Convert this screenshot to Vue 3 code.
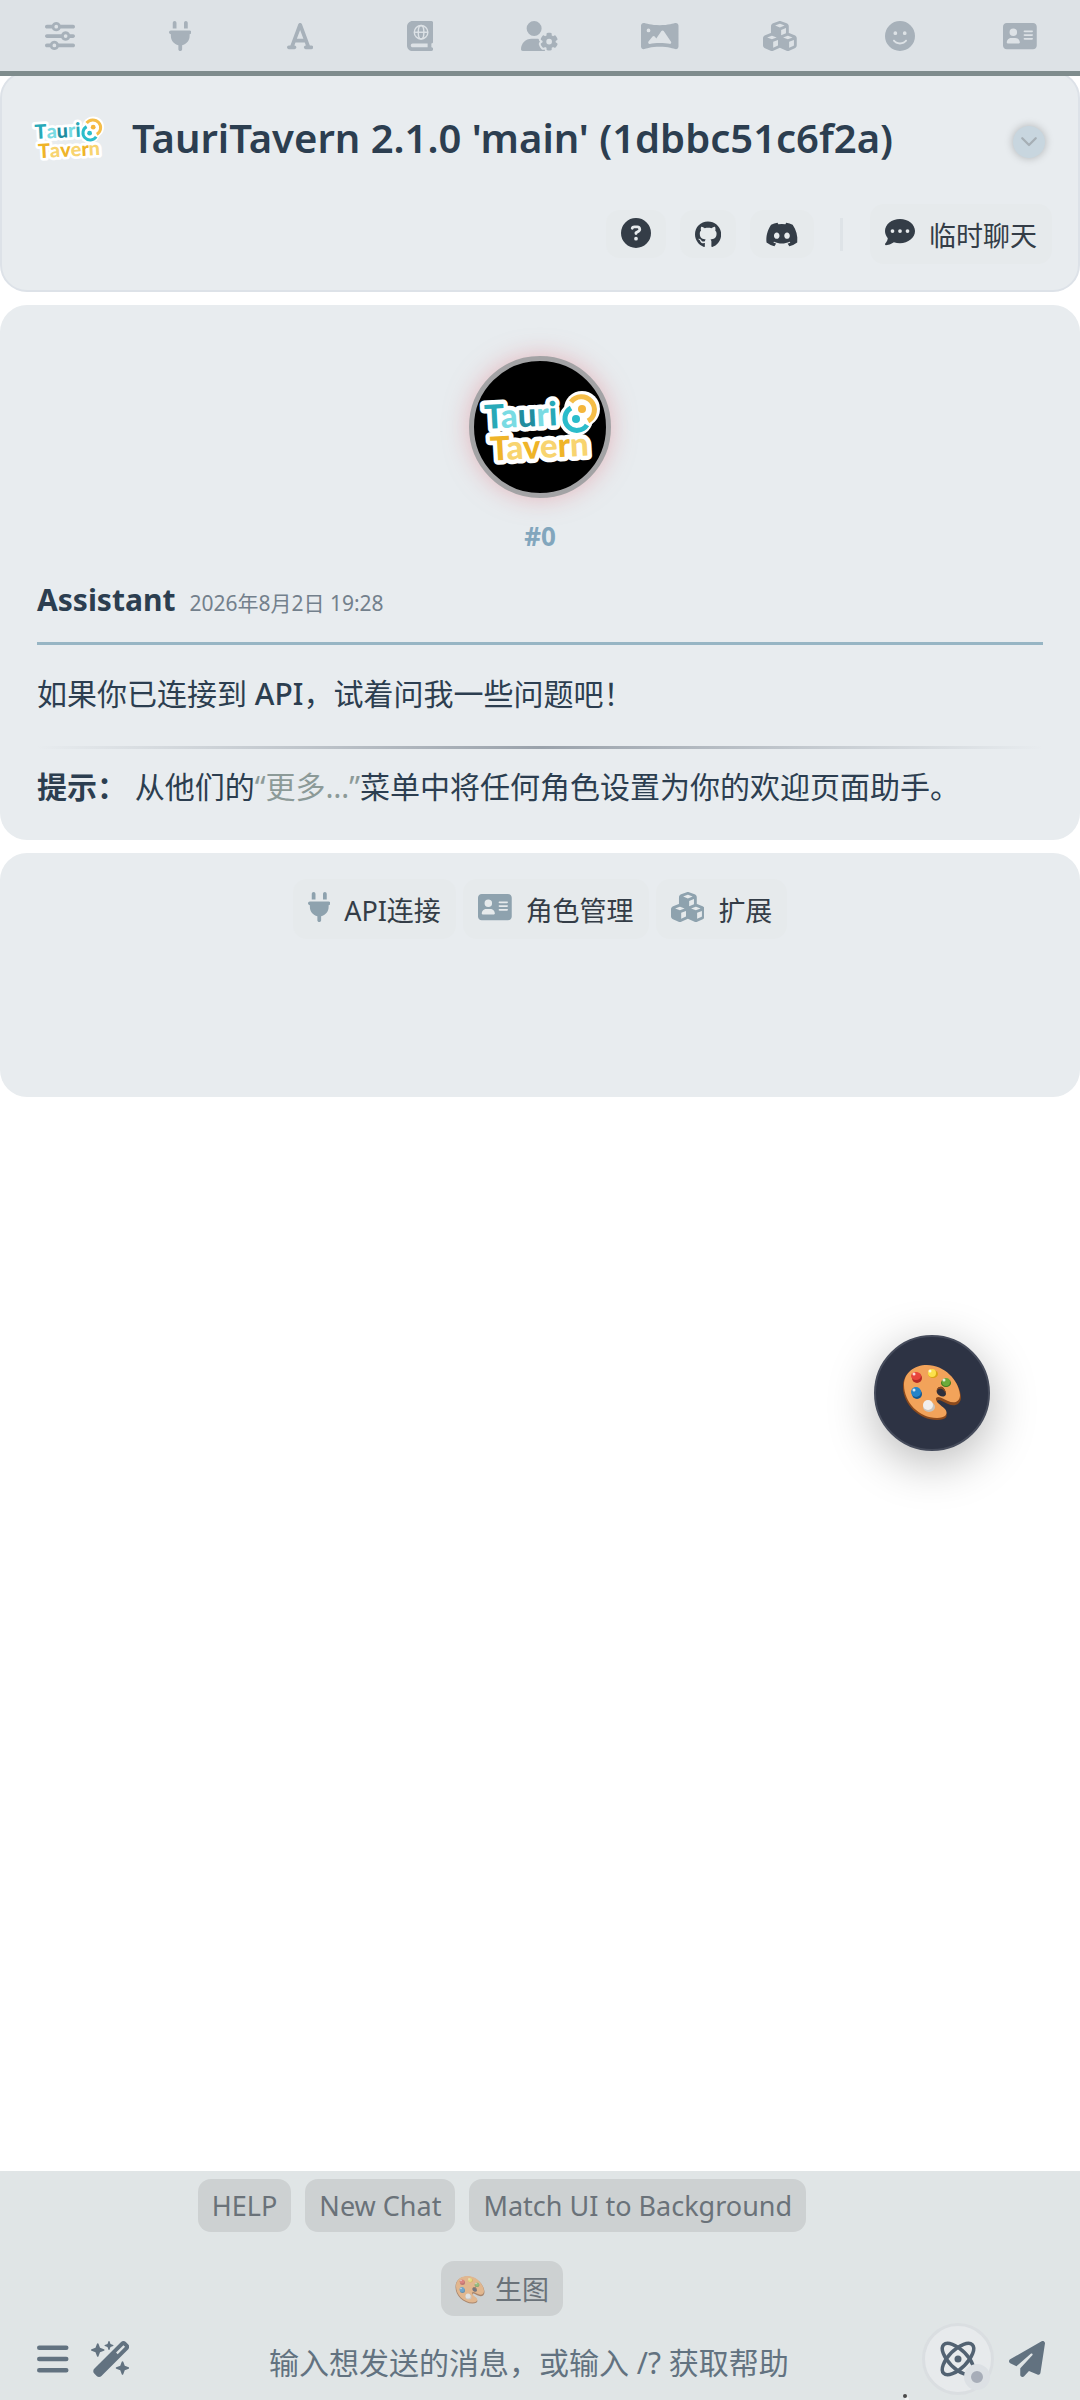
<script setup>
import { h, ref } from 'vue'

const draft = ref('')

// Two-tone wordmark: a white outline below, coloured letters above
const wordStyle = { font: '900 33px Lato, "Noto Sans", sans-serif' }
const word = (letters, x, y) =>
  h('text', { x, y, style: wordStyle }, letters.map(([c, fill]) => h('tspan', { fill, stroke: 'inherit' }, c)))
const tauri = [['T', '#28a9b8'], ['a', '#79dbe3'], ['u', '#218d9f'], ['r', '#79dbe3'], ['i', '#28a9b8']]
const tavern = [['T', '#efb428'], ['a', '#f8d46f'], ['v', '#efb428'], ['e', '#f8d46f'], ['r', '#efb428'], ['n', '#f8d46f']]
const outline = { stroke: '#fff', 'stroke-width': 9, 'stroke-linejoin': 'round', 'aria-hidden': 'true' }
const words = () => [word(tauri, 5, 37), word(tavern, 9, 69)]
const Logo = () =>
  h('svg', { viewBox: '0 0 120 76', role: 'img', 'aria-label': 'TauriTavern' }, [
    h('g', { transform: 'rotate(-3 60 38)', ...outline }, words()),
    h('circle', { cx: 102, cy: 20, r: 18, fill: '#fff' }),
    h('circle', { cx: 96, cy: 30, r: 17, fill: '#fff' }),
    h('g', { transform: 'rotate(-3 60 38)' }, words()),
    h('path', { d: 'M91 13A13 13 0 1 1 108 32', fill: 'none', stroke: '#f5bd48', 'stroke-width': 5 }),
    h('path', { d: 'M91 19A12 12 0 1 0 107 36', fill: 'none', stroke: '#2bbccb', 'stroke-width': 5 }),
    h('circle', { cx: 102, cy: 20, r: 4, fill: '#f5b63c' }),
    h('circle', { cx: 96, cy: 30, r: 4, fill: '#2bbccb' })
  ])

const icons = {
  sliders: { w: 512, d: 'M0 416c0 17.7 14.3 32 32 32l54.7 0c12.3 28.3 40.5 48 73.3 48s61-19.7 73.3-48L480 448c17.7 0 32-14.3 32-32s-14.3-32-32-32l-246.7 0c-12.3-28.3-40.5-48-73.3-48s-61 19.7-73.3 48L32 384c-17.7 0-32 14.3-32 32zm128 0a32 32 0 1 1 64 0 32 32 0 1 1 -64 0zM320 256a32 32 0 1 1 64 0 32 32 0 1 1 -64 0zm32-80c-32.8 0-61 19.7-73.3 48L32 224c-17.7 0-32 14.3-32 32s14.3 32 32 32l246.7 0c12.3 28.3 40.5 48 73.3 48s61-19.7 73.3-48l54.7 0c17.7 0 32-14.3 32-32s-14.3-32-32-32l-54.7 0c-12.3-28.3-40.5-48-73.3-48zM192 128a32 32 0 1 1 0-64 32 32 0 1 1 0 64zm73.3-64C253 35.7 224.8 16 192 16s-61 19.7-73.3 48L32 64C14.3 64 0 78.3 0 96s14.3 32 32 32l86.7 0c12.3 28.3 40.5 48 73.3 48s61-19.7 73.3-48L480 128c17.7 0 32-14.3 32-32s-14.3-32-32-32L265.3 64z' },
  plug: { w: 384, d: 'M96 0C78.3 0 64 14.3 64 32v96h64V32c0-17.7-14.3-32-32-32zM288 0c-17.7 0-32 14.3-32 32v96h64V32c0-17.7-14.3-32-32-32zM32 160c-17.7 0-32 14.3-32 32s14.3 32 32 32v32c0 77.4 55 142 128 156.8V480c0 17.7 14.3 32 32 32s32-14.3 32-32V412.8C297 398 352 333.4 352 256V224c17.7 0 32-14.3 32-32s-14.3-32-32-32H32z' },
  font: { w: 448, d: 'M254 52.8C249.3 40.3 237.3 32 224 32s-25.3 8.3-30 20.8L57.8 416H32c-17.7 0-32 14.3-32 32s14.3 32 32 32h96c17.7 0 32-14.3 32-32s-14.3-32-32-32h-1.8l18-48H303.8l18 48H320c-17.7 0-32 14.3-32 32s14.3 32 32 32h96c17.7 0 32-14.3 32-32s-14.3-32-32-32H390.2L254 52.8zM279.8 304H168.2L224 155.1 279.8 304z' },
  atlas: { w: 448, globe: true, d: 'M0 96C0 43 43 0 96 0H384h32c17.7 0 32 14.3 32 32V352c0 17.7-14.3 32-32 32v64c17.7 0 32 14.3 32 32s-14.3 32-32 32H384 96c-53 0-96-43-96-96V96zM64 416c0 17.7 14.3 32 32 32H352V384H96c-17.7 0-32 14.3-32 32z' },
  userGear: { w: 640, d: 'M224 0a128 128 0 1 1 0 256A128 128 0 1 1 224 0zM178.3 304h91.4c11.8 0 23.4 1.2 34.5 3.3c-2.1 18.5 7.4 35.6 21.8 44.8c-16.6 10.6-26.7 31.6-20 53.3c4 12.9 9.4 25.5 16.4 37.6s15.2 23.1 24.4 33c15.7 16.9 39.6 18.4 57.2 8.7v.9c0 9.2 2.7 18.5 7.9 26.3H29.7C13.3 512 0 498.7 0 482.3C0 383.8 79.8 304 178.3 304zM436 218.2c0-7 4.5-13.3 11.3-14.8c10.5-2.4 21.5-3.7 32.7-3.7s22.2 1.3 32.7 3.7c6.8 1.5 11.3 7.8 11.3 14.8v30.6c7.9 3.4 15.4 7.7 22.3 12.8l24.9-14.3c6.1-3.5 13.7-2.7 18.5 2.4c7.6 8.1 14.3 17.2 20.1 27.2s10.3 20.4 13.5 31c2.1 6.7-1.1 13.7-7.2 17.2l-25 14.4c.4 4 .7 8.1 .7 12.3s-.2 8.2-.7 12.3l25 14.4c6.1 3.5 9.2 10.5 7.2 17.2c-3.3 10.6-7.8 21-13.5 31s-12.5 19.1-20.1 27.2c-4.8 5.1-12.5 5.9-18.5 2.4l-24.9-14.3c-6.9 5.1-14.3 9.4-22.3 12.8l0 30.6c0 7-4.5 13.3-11.3 14.8c-10.5 2.4-21.5 3.7-32.7 3.7s-22.2-1.3-32.7-3.7c-6.8-1.5-11.3-7.8-11.3-14.8V454.8c-8-3.4-15.6-7.7-22.5-12.9l-24.7 14.3c-6.1 3.5-13.7 2.7-18.5-2.4c-7.6-8.1-14.3-17.2-20.1-27.2s-10.3-20.4-13.5-31c-2.1-6.7 1.1-13.7 7.2-17.2l24.8-14.3c-.4-4.1-.7-8.2-.7-12.4s.2-8.3 .7-12.4L343.8 325c-6.1-3.5-9.2-10.5-7.2-17.2c3.3-10.6 7.7-21 13.5-31s12.5-19.1 20.1-27.2c4.8-5.1 12.4-5.9 18.5-2.4l24.8 14.3c6.9-5.1 14.5-9.4 22.5-12.9V218.2zm92.1 133.5a48.1 48.1 0 1 0 -96.1 0 48.1 48.1 0 1 0 96.1 0z' },
  panorama: { w: 640, d: 'M45.6 32C20.4 32 0 52.4 0 77.6V434.4C0 459.6 20.4 480 45.6 480c5.1 0 10-.8 14.7-2.4C74.6 472.8 177.6 440 320 440s245.4 32.8 259.6 37.6c4.7 1.6 9.7 2.4 14.7 2.4c25.2 0 45.6-20.4 45.6-45.6V77.6C640 52.4 619.6 32 594.4 32c-5 0-10 .8-14.7 2.4C565.4 39.2 462.4 72 320 72S74.6 39.2 60.4 34.4C55.6 32.8 50.7 32 45.6 32zM96 160a32 32 0 1 1 64 0 32 32 0 1 1 -64 0zm272 0c7.9 0 15.4 3.9 19.8 10.5L512.3 353c5.4 8 5.6 18.4 .4 26.5s-14.7 12.3-24.2 10.7C442.7 382.4 385.2 376 320 376c-65.6 0-123.4 6.5-169.3 14.4c-9.8 1.7-19.7-2.9-24.7-11.5s-4.3-19.4 1.9-27.2L197.3 265c4.6-5.7 11.4-9 18.7-9s14.2 3.3 18.7 9l26.4 33.1 87-127.6c4.5-6.6 11.9-10.5 19.8-10.5z' },
  cubes: { w: 576, d: 'M290.8 48.6l78.4 29.7L288 109.5 206.8 78.3l78.4-29.7c1.8-.7 3.8-.7 5.7 0zM136 92.5V204.7c-1.3 .4-2.6 .8-3.9 1.3l-96 36.4C14.4 250.6 0 271.5 0 294.7V413.9c0 22.2 13.1 42.3 33.5 51.3l96 42.2c14.4 6.3 30.7 6.3 45.1 0L288 457.5l113.5 49.9c14.4 6.3 30.7 6.3 45.1 0l96-42.2c20.3-8.9 33.5-29.1 33.5-51.3V294.7c0-23.3-14.4-44.1-36.1-52.4l-96-36.4c-1.3-.5-2.6-.9-3.9-1.3V92.5c0-23.3-14.4-44.1-36.1-52.4l-96-36.4c-12.8-4.8-26.9-4.8-39.7 0l-96 36.4C150.4 48.4 136 69.3 136 92.5zM392 210.6l-82.4 31.2V152.6L392 121v89.6zM154.8 250.9l78.4 29.7L152 311.7 70.8 280.6l78.4-29.7c1.8-.7 3.8-.7 5.7 0zm18.8 204.4V354.8L256 323.2v95.9l-82.4 36.2zM421.2 250.9c1.8-.7 3.8-.7 5.7 0l78.4 29.7L424 311.7l-81.2-31.1 78.4-29.7zM523.2 421.2l-77.6 34.1V354.8L528 323.2v90.7c0 3.2-1.9 6-4.8 7.3z' },
  smile: { w: 512, d: 'M256 512A256 256 0 1 0 256 0a256 256 0 1 0 0 512zM164.1 325.5C182 346.2 212.6 368 256 368s74-21.8 91.9-42.5c5.8-6.7 15.9-7.4 22.6-1.6s7.4 15.9 1.6 22.6C349.8 372.1 311.1 400 256 400s-93.8-27.9-116.1-53.5c-5.8-6.7-5.1-16.8 1.6-22.6s16.8-5.1 22.6 1.6zM144.4 208a32 32 0 1 1 64 0 32 32 0 1 1 -64 0zm192-32a32 32 0 1 1 0 64 32 32 0 1 1 0-64z' },
  card: { w: 576, d: 'M64 32C28.7 32 0 60.7 0 96V416c0 35.3 28.7 64 64 64H512c35.3 0 64-28.7 64-64V96c0-35.3-28.7-64-64-64H64zm80 256h64c44.2 0 80 35.8 80 80c0 8.8-7.2 16-16 16H80c-8.8 0-16-7.2-16-16c0-44.2 35.8-80 80-80zm-32-96a64 64 0 1 1 128 0 64 64 0 1 1 -128 0zm256-32H496c8.8 0 16 7.2 16 16s-7.2 16-16 16H368c-8.8 0-16-7.2-16-16s7.2-16 16-16zm0 64H496c8.8 0 16 7.2 16 16s-7.2 16-16 16H368c-8.8 0-16-7.2-16-16s7.2-16 16-16zm0 64H496c8.8 0 16 7.2 16 16s-7.2 16-16 16H368c-8.8 0-16-7.2-16-16s7.2-16 16-16z' }
}

const tabs = [
  ['sliders', 'AI 设置'],
  ['plug', 'API连接'],
  ['font', '格式'],
  ['atlas', '世界书'],
  ['userGear', '用户设置'],
  ['panorama', '背景'],
  ['cubes', '扩展'],
  ['smile', '用户角色'],
  ['card', '角色管理']
]

const links = [
  { label: '帮助', cls: 'help', w: 512, d: 'M256 512A256 256 0 1 0 256 0a256 256 0 1 0 0 512zM169.8 165.3c7.9-22.3 29.1-37.3 52.8-37.3h58.3c34.9 0 63.1 28.3 63.1 63.1c0 22.6-12.1 43.5-31.7 54.8L280 264.4c-.2 13-10.9 23.6-24 23.6c-13.3 0-24-10.7-24-24V250.5c0-8.6 4.6-16.5 12.1-20.8l44.3-25.4c4.7-2.7 7.6-7.7 7.6-13.1c0-8.4-6.8-15.1-15.1-15.1H222.6c-3.4 0-6.4 2.1-7.5 5.3l-.4 1.2c-4.4 12.5-18.2 19-30.6 14.6s-19-18.2-14.6-30.6l.4-1.2zM224 352a32 32 0 1 1 64 0 32 32 0 1 1 -64 0z' },
  { label: 'GitHub', cls: 'brand', w: 496, d: 'M244.8 8C106.1 8 0 113.3 0 252c0 110.9 69.8 205.8 169.5 239.2 12.8 2.3 17.3-5.6 17.3-12.1 0-6.2-.3-40.4-.3-61.4 0 0-70 15-84.7-29.8 0 0-11.4-29.1-27.8-36.6 0 0-22.9-15.7 1.6-15.4 0 0 24.9 2 38.6 25.8 21.9 38.6 58.6 27.5 72.9 20.9 2.3-16 8.8-27.1 16-33.7-55.9-6.2-112.3-14.3-112.3-110.5 0-27.5 7.6-41.3 23.6-58.9-2.6-6.5-11.1-33.3 2.6-67.9 20.9-6.5 69 27 69 27 20-5.6 41.5-8.5 62.8-8.5s42.8 2.9 62.8 8.5c0 0 48.1-33.6 69-27 13.7 34.7 5.2 61.4 2.6 67.9 16 17.7 25.8 31.5 25.8 58.9 0 96.5-58.9 104.2-114.8 110.5 9.2 7.9 17 22.9 17 46.4 0 33.7-.3 75.4-.3 83.6 0 6.5 4.6 14.4 17.3 12.1C428.2 457.8 496 362.9 496 252 496 113.3 383.5 8 244.8 8z' },
  { label: 'Discord', cls: 'brand', w: 640, d: 'M524.531,69.836a1.5,1.5,0,0,0-.764-.7A485.065,485.065,0,0,0,404.081,32.03a1.816,1.816,0,0,0-1.923.91,337.461,337.461,0,0,0-14.9,30.6,447.848,447.848,0,0,0-134.426,0,309.541,309.541,0,0,0-15.135-30.6,1.89,1.89,0,0,0-1.924-.91A483.689,483.689,0,0,0,116.085,69.137a1.712,1.712,0,0,0-.788.676C39.068,183.651,18.186,294.69,28.43,404.354a2.016,2.016,0,0,0,.765,1.375A487.666,487.666,0,0,0,176.02,479.918a1.9,1.9,0,0,0,2.063-.676A348.2,348.2,0,0,0,208.12,430.4a1.86,1.86,0,0,0-1.019-2.588,321.173,321.173,0,0,1-45.868-21.853,1.885,1.885,0,0,1-.185-3.126c3.082-2.309,6.166-4.711,9.109-7.137a1.819,1.819,0,0,1,1.9-.256c96.229,43.917,200.41,43.917,295.5,0a1.812,1.812,0,0,1,1.924.233c2.944,2.426,6.027,4.851,9.132,7.16a1.884,1.884,0,0,1-.162,3.126,301.407,301.407,0,0,1-45.89,21.83,1.875,1.875,0,0,0-1,2.611,391.055,391.055,0,0,0,30.014,48.815,1.864,1.864,0,0,0,2.063.7A486.048,486.048,0,0,0,610.7,405.729a1.882,1.882,0,0,0,.765-1.352C623.729,277.594,590.933,167.465,524.531,69.836ZM222.491,337.58c-28.972,0-52.844-26.587-52.844-59.239S193.056,219.1,222.491,219.1c29.665,0,53.306,26.82,52.843,59.239C275.334,310.993,251.924,337.58,222.491,337.58Zm195.38,0c-28.971,0-52.843-26.587-52.843-59.239S388.437,219.1,417.871,219.1c29.667,0,53.307,26.82,52.844,59.239C470.715,310.993,447.538,337.58,417.871,337.58Z' }
]

const shortcuts = [
  ['plug', 'API连接'],
  ['card', '角色管理'],
  ['cubes', '扩展']
]

const replies = ['HELP', 'New Chat', 'Match UI to Background']
</script>

<template>
  <!-- Painter's palette, shared by the floating button and the quick reply -->
  <svg class="defs" aria-hidden="true">
    <symbol id="palette" viewBox="0 0 60 56">
      <path d="M1 22C1 9 11 1 25 1c17 0 33 15 34 31 0 8-7 10-13 7-5-2-9-6-11-3-1 4 5 6 8 10 4 5 1 9-8 9C17 55 1 39 1 22z" fill="#8c4a1c" />
      <path d="M2 20C2 8 12 0 25 0c17 0 32 15 33 30 0 7-6 9-12 6-5-2-9-6-12-3-1 4 5 7 9 11 4 5 0 9-8 9C17 53 2 37 2 20z" fill="#f2a35a" />
      <path d="M40 22c-4-1-6 3-5 6 2 4 8 5 9 1 0-3-2-6-4-7z" fill="#2d2f3c" />
      <path d="M40 22c-4-1-6 3-5 5 0-3 2-4 5-3 2 1 3 3 4 5 0-3-2-6-4-7z" fill="#8c4a1c" />
      <ellipse cx="15" cy="13" rx="5" ry="5" fill="#b52b25" /><ellipse cx="14" cy="11" rx="5" ry="4" fill="#e8453c" />
      <ellipse cx="31" cy="9" rx="5" ry="4" fill="#d9a514" /><ellipse cx="30" cy="8" rx="4" ry="4" fill="#fce14b" />
      <ellipse cx="44" cy="18" rx="5" ry="4" fill="#3c7c1f" /><ellipse cx="44" cy="17" rx="4" ry="4" fill="#6cab3a" />
      <ellipse cx="15" cy="29" rx="5" ry="5" fill="#15588f" /><ellipse cx="14" cy="27" rx="5" ry="5" fill="#2684c8" />
      <ellipse cx="27" cy="42" rx="6" ry="5" fill="#c9c4be" /><ellipse cx="26" cy="40" rx="5" ry="5" fill="#f1efed" />
      <g fill="#fff" opacity=".8"><circle cx="12" cy="9" r="1.5" /><circle cx="28" cy="6" r="1.5" /><circle cx="42" cy="15" r="1.5" /><circle cx="12" cy="25" r="1.5" /></g>
    </symbol>
  </svg>

  <div class="page">
    <nav class="topbar">
      <button v-for="[name, label] in tabs" :key="name" type="button" :aria-label="label">
        <svg class="icon" :viewBox="`0 0 ${icons[name].w} 512`">
          <path :d="icons[name].d" fill-rule="evenodd" />
          <g v-if="icons[name].globe" fill="none" stroke="#dde2e6" stroke-width="24">
            <circle cx="240" cy="192" r="116" />
            <ellipse cx="240" cy="192" rx="48" ry="116" />
            <path d="M124 192H356" />
          </g>
        </svg>
      </button>
    </nav>

    <main>
      <header class="panel intro">
        <div class="intro-head">
          <Logo class="logo" />
          <h1>TauriTavern 2.1.0 'main' (1dbbc51c6f2a)</h1>
          <button class="toggle" type="button" aria-label="展开">
            <svg viewBox="0 0 16 10"><path d="M2 2l6 6 6-6" /></svg>
          </button>
        </div>
        <div class="intro-actions">
          <a v-for="l in links" :key="l.label" href="#" class="soft" :class="l.cls" :aria-label="l.label">
            <svg class="icon" :viewBox="`0 0 ${l.w} 512`"><path :d="l.d" /></svg>
          </a>
          <span class="divider"></span>
          <button type="button" class="soft labelled">
            <svg class="icon" viewBox="0 0 512 512"><path d="M256 448c141.4 0 256-93.1 256-208S397.4 32 256 32S0 125.1 0 240c0 45.1 17.7 86.8 47.7 120.9c-1.9 24.5-11.4 46.3-21.4 62.9c-5.5 9.2-11.1 16.6-15.2 21.6c-2.1 2.5-3.7 4.4-4.9 5.7c-.6 .6-1 1.1-1.3 1.4l-.3 .3c-4.6 4.6-5.9 11.4-3.4 17.4c2.5 6 8.3 9.9 14.8 9.9c28.7 0 57.6-8.9 81.6-19.3c22.9-10 42.4-21.9 54.3-30.6c31.8 11.5 67 17.9 104.1 17.9zM128 208a32 32 0 1 1 0 64 32 32 0 1 1 0-64zm128 0a32 32 0 1 1 0 64 32 32 0 1 1 0-64zm96 32a32 32 0 1 1 64 0 32 32 0 1 1 -64 0z" /></svg>
            <span>临时聊天</span>
          </button>
        </div>
      </header>

      <article class="panel message">
        <div class="avatar"><Logo /></div>
        <div class="number">#0</div>
        <div class="byline">
          <strong>Assistant</strong>
          <time datetime="2026-08-02T19:28">2026年8月2日 19:28</time>
        </div>
        <p>如果你已连接到 <span class="latin">API</span>，试着问我一些问题吧！</p>
        <hr>
        <p><b>提示：</b> 从他们的<q>“更多…”</q>菜单中将任何角色设置为你的欢迎页面助手。</p>
      </article>

      <section class="panel shortcuts">
        <button v-for="[name, label] in shortcuts" :key="name" type="button" class="soft labelled">
          <svg class="icon" :viewBox="`0 0 ${icons[name].w} 512`"><path :d="icons[name].d" /></svg>
          <span>{{ label }}</span>
        </button>
      </section>
    </main>

    <button class="fab" type="button" aria-label="生图"><svg><use href="#palette" /></svg></button>

    <footer>
      <div class="replies">
        <button v-for="r in replies" :key="r" type="button">{{ r }}</button>
      </div>
      <div class="replies second">
        <button type="button"><svg class="emoji"><use href="#palette" /></svg>生图</button>
      </div>
      <form class="composer" @submit.prevent>
        <button type="button" aria-label="菜单">
          <svg class="icon" viewBox="0 0 448 512"><path d="M32 64H416a32 32 0 0 1 0 64H32a32 32 0 0 1 0-64zM32 224H416a32 32 0 0 1 0 64H32a32 32 0 0 1 0-64zM32 384H416a32 32 0 0 1 0 64H32a32 32 0 0 1 0-64z" /></svg>
        </button>
        <button type="button" aria-label="工具">
          <svg class="icon" viewBox="0 0 544 512"><path fill-rule="evenodd" d="M234.7 42.7L197 56.8c-3 1.1-5 4-5 7.2s2 6.1 5 7.2l37.7 14.1L248.8 123c1.1 3 4 5 7.2 5s6.1-2 7.2-5l14.1-37.7L315 71.2c3-1.1 5-4 5-7.2s-2-6.1-5-7.2L277.3 42.7 263.2 5c-1.1-3-4-5-7.2-5s-6.1 2-7.2 5L234.7 42.7zM46.1 395.4c-18.7 18.7-18.7 49.1 0 67.9l34.6 34.6c18.7 18.7 49.1 18.7 67.9 0L529.9 116.5c18.7-18.7 18.7-49.1 0-67.9L495.3 14.1c-18.7-18.7-49.1-18.7-67.9 0L46.1 395.4zM484.6 82.6l-105 105-23.3-23.3 105-105 23.3 23.3zM7.5 117.2C3 118.9 0 123.2 0 128s3 9.1 7.5 10.8L64 160l21.2 56.5c1.7 4.5 6 7.5 10.8 7.5s9.1-3 10.8-7.5L128 160l56.5-21.2c4.5-1.7 7.5-6 7.5-10.8s-3-9.1-7.5-10.8L128 96 106.8 39.5C105.1 35 100.8 32 96 32s-9.1 3-10.8 7.5L64 96 7.5 117.2zm352 256c-4.5 1.7-7.5 6-7.5 10.8s3 9.1 7.5 10.8L416 416l21.2 56.5c1.7 4.5 6 7.5 10.8 7.5s9.1-3 10.8-7.5L480 416l56.5-21.2c4.5-1.7 7.5-6 7.5-10.8s-3-9.1-7.5-10.8L480 352l-21.2-56.5c-1.7-4.5-6-7.5-10.8-7.5s-9.1 3-10.8 7.5L416 352l-56.5 21.2z" /></svg>
        </button>
        <input v-model="draft" type="text" aria-label="消息" placeholder="输入想发送的消息，或输入 /? 获取帮助">
        <button type="button" class="agent" aria-label="助手模式">
          <svg viewBox="0 0 24 24"><circle cx="12" cy="12" r="2" /><path d="M20.2 20.2c2.04-2.03.02-7.36-4.5-11.9-4.54-4.52-9.87-6.54-11.9-4.5-2.04 2.03-.02 7.36 4.5 11.9 4.54 4.52 9.87 6.54 11.9 4.5Z" /><path d="M15.7 15.7c4.52-4.54 6.54-9.87 4.5-11.9-2.03-2.04-7.36-.02-11.9 4.5-4.52 4.54-6.54 9.87-4.5 11.9 2.03 2.04 7.36.02 11.9-4.5Z" /></svg>
          <span class="status"></span>
        </button>
        <button type="submit" aria-label="发送">
          <svg class="icon" viewBox="0 0 512 512"><path d="M498.1 5.6c10.1 7 15.4 19.1 13.5 31.2l-64 416c-1.5 9.7-7.4 18.2-16 23s-18.9 5.4-28 1.6L284 427.7l-68.5 74.1c-8.9 9.7-22.9 12.9-35.2 8.1S160 493.2 160 480V396.4c0-4 1.5-7.8 4.2-10.7L331.8 202.8c5.8-6.3 5.6-16-.4-22s-15.7-6.4-22-.7L106 360.8 17.7 316.6C7.1 311.3 .3 300.7 0 288.9s5.9-22.8 16.1-28.7l448-256c10.7-6.1 23.9-5.5 34 1.4z" /></svg>
        </button>
      </form>
      <span class="speck"></span>
    </footer>
  </div>
</template>

<style>
body { margin: 0; background: #fff; }
</style>

<style scoped>
.page {
  display: flex;
  flex-direction: column;
  min-height: 100vh;
  box-sizing: border-box;
  color: #2c3e50;
  font-family: "Noto Sans", "Noto Sans CJK SC", sans-serif;
  font-size: 30px;
  line-height: 40px;
}
.page * { box-sizing: border-box; }
.defs { position: absolute; width: 0; height: 0; }
button { border: 0; padding: 0; background: none; color: inherit; font: inherit; }
.icon { display: block; height: 30px; width: auto; fill: currentColor; }

.topbar {
  position: relative;
  z-index: 1;
  display: grid;
  grid-template-columns: repeat(9, 1fr);
  height: 76px;
  margin-bottom: -5px;
  border-bottom: 5px solid #7f8c8d;
  background: #dde2e6;
  color: #a7b1ba;
}
.topbar button { display: flex; align-items: center; justify-content: center; }

main { display: flex; flex-direction: column; gap: 13px; }
.panel { border-radius: 27px; background: #e8ecef; }

.intro { padding: 33px 26px 26px 30px; border: 2px solid #dde2e8; }
.intro-head { display: flex; align-items: center; height: 64px; }
.logo { width: 72px; height: 46px; overflow: visible; }
h1 { flex: 1; margin: 0 0 0 28px; font-size: 40px; line-height: 54px; font-weight: 600; }
.toggle {
  display: flex;
  align-items: center;
  justify-content: center;
  width: 32px;
  height: 32px;
  margin: 8px 7px 0 0;
  border-radius: 50%;
  background: #c8d6df;
  box-shadow: 0 0 8px rgba(0, 0, 0, .25);
}
.toggle svg { width: 18px; fill: none; stroke: #a6afb5; stroke-width: 2px; stroke-linecap: round; stroke-linejoin: round; }
.intro-actions { display: flex; align-items: center; justify-content: flex-end; gap: 14px; margin-top: 34px; }
.soft { display: flex; align-items: center; justify-content: center; padding: 0 15px; border-radius: 14px; background: #e6eaec; color: #343d47; }
.help, .brand { height: 48px; }
.help { padding-bottom: 3px; }
.brand .icon { height: 27px; }
.divider { width: 3px; height: 33px; margin: 0 13px 0 12px; background: #dee3e7; }
.labelled { gap: 14px; height: 60px; padding-top: 4px; font-size: 27px; }
.labelled .icon { margin-bottom: 8px; }

.message { display: flex; flex-direction: column; padding: 51px 37px 33px; }
.avatar {
  display: flex;
  align-items: center;
  justify-content: center;
  align-self: center;
  width: 142px;
  height: 142px;
  border: 5px solid #a3a3a5;
  border-radius: 50%;
  background: #000;
  box-shadow: 0 0 24px rgba(225, 130, 140, .5);
}
.avatar svg { width: 120px; height: 76px; overflow: visible; }
.number { margin-top: 18px; text-align: center; font-size: 26px; font-weight: 700; color: #82a6bd; }
.byline { display: flex; align-items: baseline; gap: 14px; padding: 24px 0 19px; border-bottom: 3px solid #97b5c4; }
time { font-size: 21px; color: #73808c; }
p { margin: 29px 0 0; }
.latin { font-weight: 500; }
hr { width: 100%; height: 3px; margin: 32px 0 0; border: 0; background: linear-gradient(90deg, transparent, #9aa2ab, transparent); }
hr + p { margin-top: 18px; }
q { quotes: none; color: #8c9a98; }

.shortcuts { display: flex; align-items: flex-start; justify-content: center; gap: 7px; min-height: 244px; padding-top: 26px; }
.shortcuts .icon { color: #8ea2ae; }

.fab {
  position: fixed;
  right: 90px;
  top: 1335px;
  display: flex;
  align-items: center;
  justify-content: center;
  width: 116px;
  height: 116px;
  border: 2px solid #454b5b;
  border-radius: 50%;
  background: #2d3344;
  box-shadow: 0 12px 48px rgba(0, 0, 0, .28);
}
.fab svg { width: 60px; height: 56px; }

footer { position: relative; margin-top: auto; padding-top: 8px; background: #e0e5e6; }
.replies { display: flex; justify-content: center; gap: 14px; padding-right: 76px; }
.replies button { display: flex; align-items: center; gap: 10px; height: 53px; padding: 0 14px; border-radius: 13px; background: #cdd1d2; color: #6a7279; font-size: 27px; }
.second { margin-top: 29px; }
.second button { height: 55px; padding-top: 2px; }
.emoji { width: 30px; height: 30px; opacity: .55; }
.composer { display: flex; align-items: center; padding: 7px 35px 5px 37px; color: #627280; }
.composer > button { flex: none; margin-right: 22px; }
.composer .icon { height: 36px; }
input { flex: 1; min-width: 0; padding: 8px 15px 0 0; border: 0; outline: 0; background: none; color: inherit; text-align: center; font: inherit; }
input::placeholder { color: #627280; opacity: 1; }
.composer .agent {
  position: relative;
  display: flex;
  align-items: center;
  justify-content: center;
  width: 72px;
  height: 72px;
  margin-right: 15px;
  border: 3px solid #dadee1;
  border-radius: 50%;
  background: #e7eaec;
}
.agent svg { width: 42px; height: 42px; fill: none; stroke: #526272; stroke-width: 2px; }
.agent circle { fill: #526272; stroke: none; }
.status { position: absolute; right: 1px; bottom: 2px; width: 26px; height: 26px; border: 7px solid #dce0e4; border-radius: 50%; background: #a7adb8; }
.composer > button:last-child { margin-right: 0; }
.speck { position: absolute; right: 173px; bottom: 2px; width: 4px; height: 4px; border-radius: 50%; background: #4a4a4a; box-shadow: 2px 3px 0 #f2f4f4; }
</style>
